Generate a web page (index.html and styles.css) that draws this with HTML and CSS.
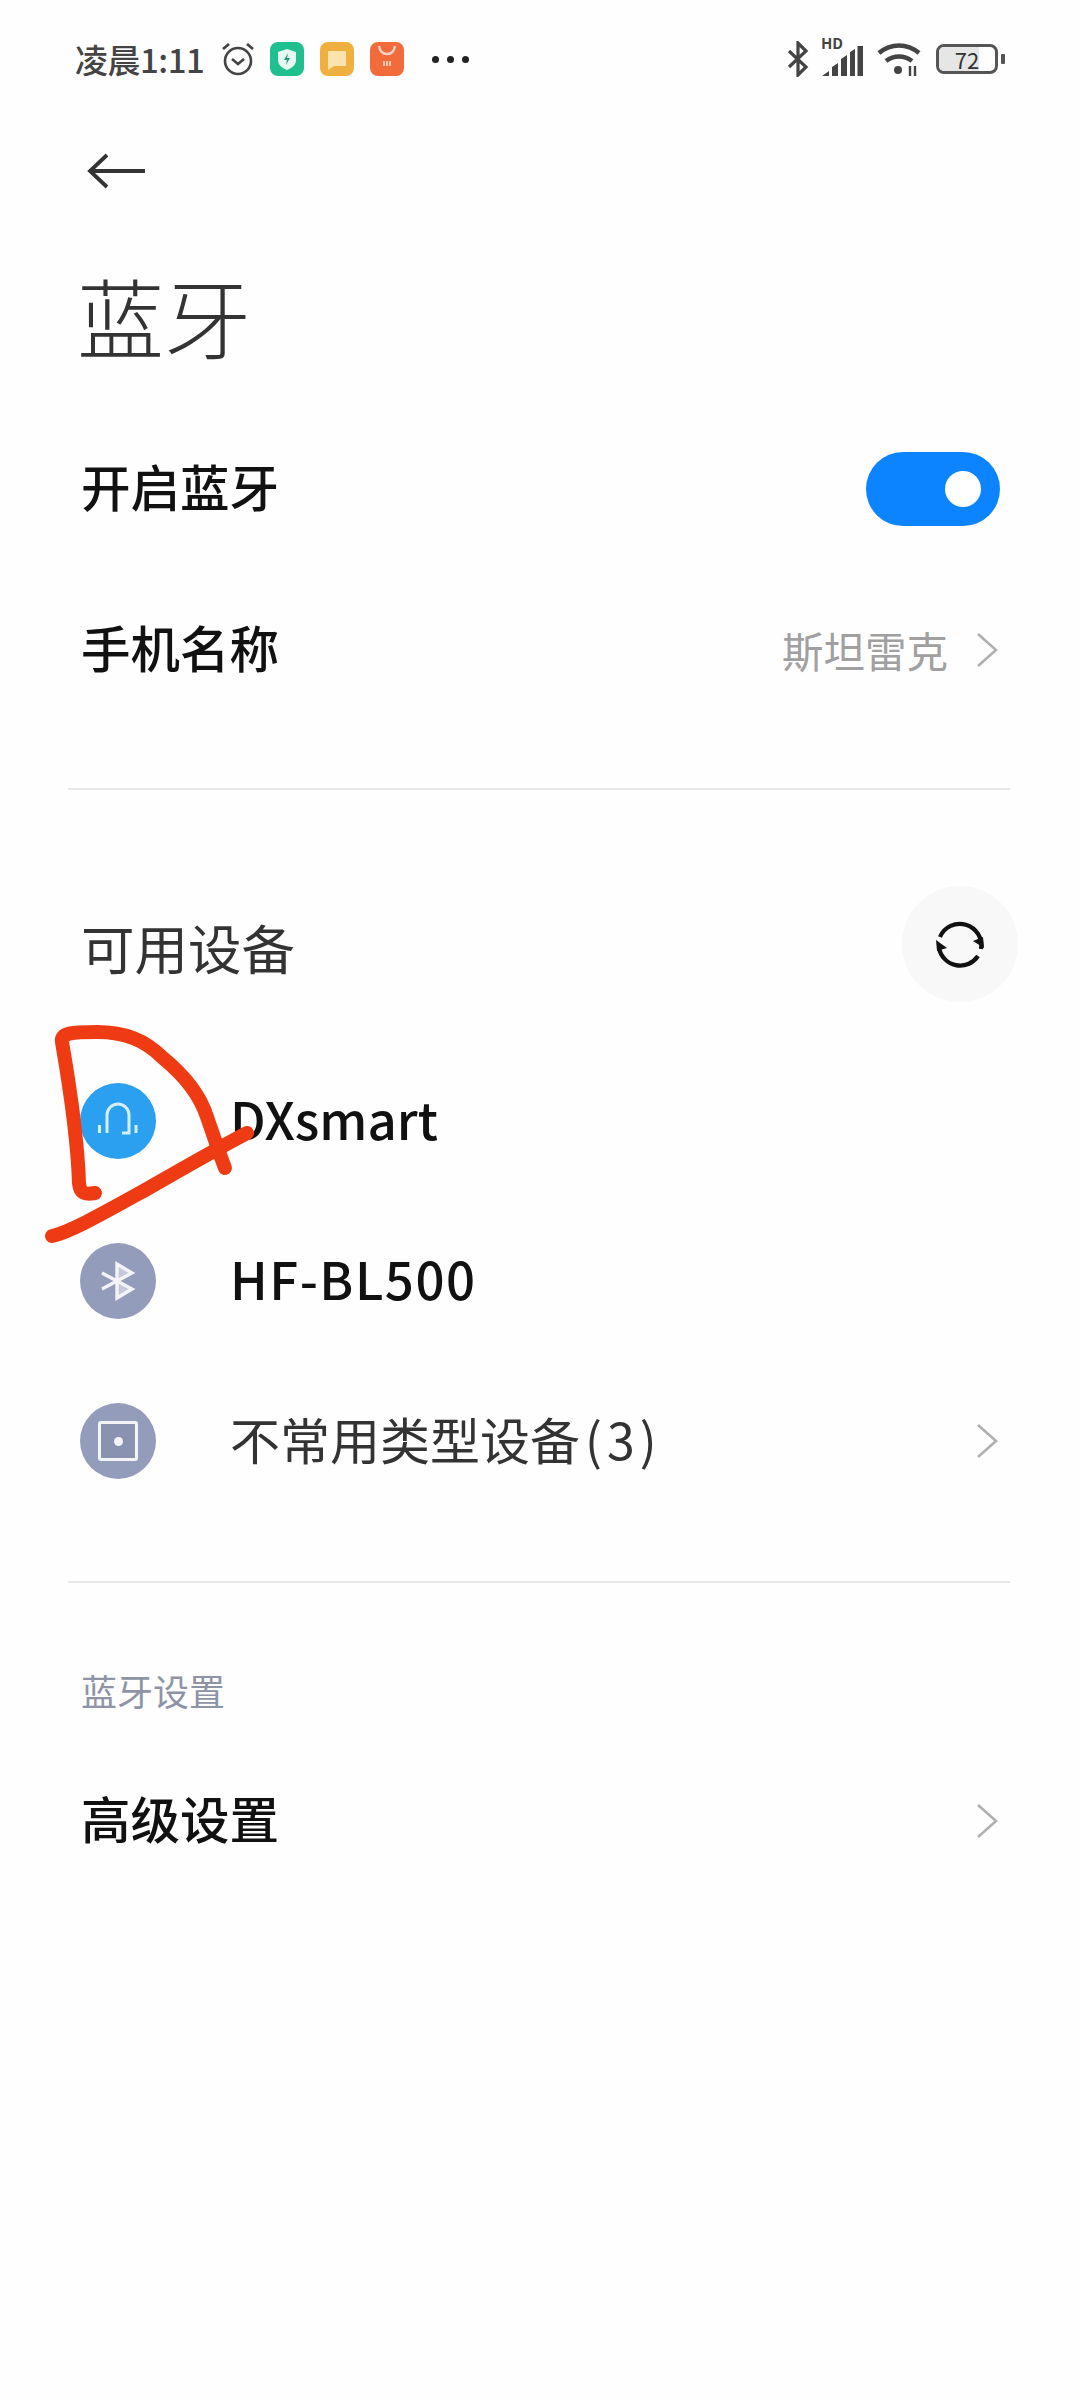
FILE: index.html

```html
<!DOCTYPE html>
<html lang="zh-CN">
<head>
  <meta charset="UTF-8">
  <meta name="viewport" content="width=device-width, initial-scale=1.0">
  <title>蓝牙</title>
  <link rel="stylesheet" href="styles.css">
</head>
<body>
  <div class="status">
    <div class="status-left">
      <span class="clock">凌晨1:11</span>
      <svg class="alarm" viewBox="0 0 36 36"><circle cx="18" cy="20" r="13" fill="none" stroke="#444" stroke-width="2.6"/><path d="M12 18l6 5 6-5" fill="none" stroke="#444" stroke-width="2.6"/><path d="M3 8l6-5M33 8l-6-5" stroke="#444" stroke-width="2.8"/></svg>
      <svg class="app" viewBox="0 0 34 34"><rect width="34" height="34" rx="8" fill="#1fbf8f"/><path d="M17 7l9 3v8c0 5-4 8-9 10-5-2-9-5-9-10v-8z" fill="#e6f8f2"/><path d="M18 11l-4 7h3l-1 5 4-7h-3z" fill="#1a9c78"/></svg>
      <svg class="app" viewBox="0 0 34 34"><rect width="34" height="34" rx="8" fill="#f0b03f"/><path d="M8 9h18v15H14l-6 4z" fill="#fbe3ae"/></svg>
      <svg class="app" viewBox="0 0 34 34"><rect width="34" height="34" rx="8" fill="#f26b3a"/><path d="M9 4c1 6 4 8 8 8s7-2 8-8" fill="none" stroke="#fbd3c2" stroke-width="2.4"/><path d="M14 19v5M17 19v5M20 19v5" stroke="#fbd3c2" stroke-width="1.8"/></svg>
      <div class="dots"><i></i><i></i><i></i></div>
    </div>
    <div class="status-right">
      <svg class="st-bt" viewBox="0 0 22 36"><path d="M2 10l17 16-8 8V2l8 8L2 26" fill="none" stroke="#444" stroke-width="3.2"/></svg>
      <div class="signal">
        <span class="hd">HD</span>
        <svg viewBox="0 0 42 32"><path d="M1 31l7-5v5zM11 31V22l6-4v13zM20 31V14l6-4v21zM29 31V7l5-3v27zM36.500 31V1h5.500v30z" fill="#444"/></svg>
      </div>
      <svg class="wifi" viewBox="0 0 44 36"><path d="M2 12c12-10 28-10 40 0M9 20c8-6 18-6 26 0" fill="none" stroke="#444" stroke-width="4.600"/><circle cx="21" cy="29" r="4" fill="#444"/><path d="M33 25v10M38 25v10" stroke="#444" stroke-width="2.400"/></svg>
      <div class="battery"><div class="batt-body"><div class="batt-fill"></div><span>72</span></div><div class="batt-nub"></div></div>
    </div>
  </div>

  <div class="backbar">
    <svg class="back" viewBox="0 0 58 36"><path d="M20 2L3 18l17 16M3 18h55" fill="none" stroke="#333" stroke-width="3.800"/></svg>
  </div>

  <h1 class="title">蓝牙</h1>

  <div class="row">
    <span class="label">开启蓝牙</span>
    <div class="switch"><div class="knob"></div></div>
  </div>
  <div class="row">
    <span class="label">手机名称</span>
    <div class="row-right">
      <span class="value">斯坦雷克</span>
      <svg class="chev" viewBox="0 0 22 36"><path d="M2 2l18 16L2 34" fill="none" stroke="#b0b0b0" stroke-width="2.6"/></svg>
    </div>
  </div>

  <div class="divider first"></div>

  <div class="row group">
    <span class="label light big">可用设备</span>
    <div class="refresh">
      <svg viewBox="0 0 52 52"><path d="M6 19A21.500 21.500 0 0 1 47 31M44 38A21.500 21.500 0 0 1 5 30" fill="none" stroke="#111" stroke-width="4.200"/><path d="M50 30L39 23l10-4zM2 22l11 8-10 3z" fill="#111"/></svg>
    </div>
  </div>

  <div class="row device">
    <div class="dev-icon blue">
      <svg viewBox="0 0 44 44"><path d="M11 34V16a11 11 0 0 1 22 0v18h-7M3.500 26v8M40 26v8" fill="none" stroke="#d5eefc" stroke-width="3"/></svg>
    </div>
    <span class="label name">DXsmart</span>
  </div>
  <div class="row device">
    <div class="dev-icon">
      <svg viewBox="0 0 44 44"><path d="M21 21l15-7-15-9zM21 21l15 9-15 9z" fill="#c4c9da"/><path d="M6 14l30 16-15 9V5l15 9L6 30" fill="none" stroke="#f2f4f8" stroke-width="3.400"/></svg>
    </div>
    <span class="label name wide">HF-BL500</span>
  </div>
  <div class="row device">
    <div class="dev-icon">
      <div class="square"><i></i></div>
    </div>
    <span class="label light name grow">不常用类型设备<span class="count">(3)</span></span>
    <svg class="chev" viewBox="0 0 22 36"><path d="M2 2l18 16L2 34" fill="none" stroke="#b0b0b0" stroke-width="2.6"/></svg>
  </div>

  <div class="divider second"></div>

  <div class="section-name">蓝牙设置</div>
  <div class="row">
    <span class="label">高级设置</span>
    <svg class="chev" viewBox="0 0 22 36"><path d="M2 2l18 16L2 34" fill="none" stroke="#b0b0b0" stroke-width="2.6"/></svg>
  </div>

  <!-- hand drawn red mark on top of the screenshot -->
  <svg class="scribble" viewBox="0 0 1080 2400">
    <path d="M95 1193C84 1195 80 1193 79 1183C78 1150 72 1100 62 1042C60 1033 72 1032 97 1032C125 1032 145 1040 163 1058C185 1076 200 1095 207 1117C215 1140 220 1155 225 1168" fill="none" stroke="#ee3b14" stroke-width="14" stroke-linecap="round"/>
    <path d="M52 1236C70 1232 100 1215 147 1189C180 1170 215 1150 247 1133" fill="none" stroke="#ee3b14" stroke-width="14" stroke-linecap="round"/>
  </svg>
</body>
</html>
```

FILE: styles.css

```css
body {
  margin: 0;
  width: 1080px;
  height: 2400px;
  overflow: hidden;
  position: relative;
  background: #fefefe;
  color: #111;
  font-family: "Noto Sans CJK SC", "Noto Sans", sans-serif;
}

/* status bar */
.status {
  height: 118px;
  padding: 0 75px;
  display: flex;
  align-items: center;
  justify-content: space-between;
}

.status-left, .status-right {
  display: flex;
  align-items: center;
}

.clock {
  font-size: 33px;
  font-weight: 500;
  color: #444;
  letter-spacing: -0.5px;
}

.alarm {
  width: 36px;
  height: 36px;
  margin-left: 16px;
  margin-right: 14px;
}

.app {
  width: 34px;
  height: 34px;
  margin-right: 16px;
}

.dots {
  display: flex;
  gap: 8px;
  margin-left: 12px;
}

.dots i {
  width: 7px;
  height: 7px;
  border-radius: 50%;
  background: #222;
}

.st-bt {
  width: 22px;
  height: 36px;
}

.signal {
  position: relative;
  width: 42px;
  height: 32px;
  margin-left: 12px;
  margin-top: 4px;
}

.signal svg {
  width: 42px;
  height: 32px;
  display: block;
}

.hd {
  position: absolute;
  left: 0;
  top: -9px;
  font-size: 15px;
  font-weight: 700;
  line-height: 14px;
  color: #444;
}

.wifi {
  width: 44px;
  height: 36px;
  margin-left: 14px;
}

.battery {
  display: flex;
  align-items: center;
  margin-left: 15px;
}

.batt-body {
  width: 62px;
  height: 30px;
  box-sizing: border-box;
  border: 3px solid #555;
  border-radius: 8px;
  position: relative;
  display: flex;
  align-items: center;
  justify-content: center;
  overflow: hidden;
}

.batt-fill {
  position: absolute;
  left: 0;
  top: 0;
  bottom: 0;
  width: 72%;
  background: #e6e6e6;
}

.batt-body span {
  position: relative;
  font-size: 22px;
  line-height: 24px;
  color: #333;
}

.batt-nub {
  width: 4px;
  height: 10px;
  margin-left: 3px;
  background: #555;
  border-radius: 1px;
}

/* header */
.backbar {
  height: 106px;
  padding-left: 87px;
  display: flex;
  align-items: center;
}

.back {
  width: 58px;
  height: 36px;
}

.title {
  margin: 0;
  height: 184px;
  padding-left: 77px;
  box-sizing: border-box;
  font-size: 87px;
  font-weight: 300;
  line-height: 182px;
  color: #333;
}

/* rows */
.row {
  height: 161px;
  padding: 0 82px 0 81px;
  display: flex;
  align-items: center;
  justify-content: space-between;
}

.label {
  font-size: 49.5px;
  font-weight: 500;
  line-height: 60px;
  padding-bottom: 6px;
}

.label.light {
  font-weight: 400;
  color: #333;
}

.label.big {
  font-size: 53.5px;
}

.label.name {
  font-size: 51px;
}

.wide {
  letter-spacing: 1.5px;
}

.label.grow {
  flex: 1;
  font-size: 50px;
}

.count {
  letter-spacing: 5px;
  margin-left: 5px;
}

.row-right {
  display: flex;
  align-items: center;
}

.value {
  font-size: 41.5px;
  color: #a0a0a0;
  margin-right: 28px;
}

.chev {
  width: 22px;
  height: 36px;
  flex: none;
}

.switch {
  width: 134px;
  height: 74px;
  margin-right: -2px;
  border-radius: 37px;
  background: #0d84ff;
  display: flex;
  align-items: center;
  justify-content: flex-end;
  padding-right: 19px;
  box-sizing: border-box;
}

.knob {
  width: 36px;
  height: 36px;
  border-radius: 50%;
  background: #fff;
}

.divider {
  height: 2px;
  margin: 0 70px 0 68px;
  background: #e8e8e8;
}

.divider.first {
  margin-top: 58px;
}

.group {
  margin-top: 79px;
  margin-bottom: 11px;
}

.refresh {
  width: 116px;
  height: 116px;
  margin-right: -20px;
  margin-top: -12px;
  border-radius: 50%;
  background: #f8f8f8;
  display: flex;
  align-items: center;
  justify-content: center;
}

.refresh svg {
  width: 52px;
  height: 52px;
}

.device {
  height: 160px;
  padding-left: 80px;
  justify-content: flex-start;
}

.dev-icon {
  width: 76px;
  height: 76px;
  border-radius: 50%;
  background: #949cbc;
  margin-right: 74px;
  display: flex;
  align-items: center;
  justify-content: center;
  flex: none;
}

.dev-icon.blue {
  background: #2b9ff0;
}

.dev-icon svg {
  width: 44px;
  height: 44px;
}

.square {
  width: 34px;
  height: 34px;
  border: 3px solid #f2f4f8;
  border-radius: 3px;
  background: #8a92b2;
  display: flex;
  align-items: center;
  justify-content: center;
}

.square i {
  width: 9px;
  height: 9px;
  border-radius: 50%;
  background: #f2f4f8;
}

.divider.second {
  margin-top: 60px;
}

.section-name {
  margin-top: 85px;
  padding-left: 81px;
  font-size: 36px;
  line-height: 44px;
  color: #8e94a6;
}

.section-name + .row {
  margin-top: 28px;
}

/* the red pen mark lies over the list */
.scribble {
  position: absolute;
  left: 0;
  top: 0;
  width: 1080px;
  height: 2400px;
  pointer-events: none;
}
```
